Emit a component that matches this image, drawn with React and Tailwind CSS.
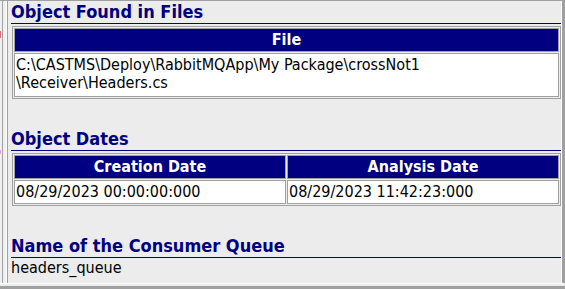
export default function App() {
  const font = "font-['DejaVu_Sans_Condensed','DejaVu_Sans',sans-serif]";
  return (
    <div className={`w-[565px] h-[289px] flex flex-col bg-[#ececec] overflow-hidden ${font}`}>
      <div className="h-[1px] bg-[#a0a0a0]" />
      <div className="flex h-[282px]">
        {/* left strip */}
        <div className="flex">
          <div className="w-[1px] bg-[#f0f0f0] flex flex-col">
            <div className="mt-[30px] h-[7px] bg-[#e07070]" />
            <div className="mt-[112px] h-[4px] bg-[#e0a0e0]" />
          </div>
          <div className="w-[1px] bg-[#f0f0f0]" />
          <div className="w-[1px] bg-[#a0a0a0]" />
          <div className="w-[3px] bg-[#f0f0f0]" />
          <div className="w-[1px] bg-white" />
          <div className="w-[1px] bg-[#a0a0a0]" />
        </div>
        {/* main */}
        <div className="flex-1 pl-[3px] flex flex-col">
          <div className="h-[22px] leading-[22px] text-[18px] font-bold text-[#000080] border-b border-[#000080] box-content">
            Object Found in Files
          </div>
          <div className="mt-[2px] ml-[1px] border border-[#a0a0a0] p-[1px] flex flex-col gap-[1px]">
            <div className="border border-[#a0a0a0] bg-[#000080] h-[22px] leading-[22px] box-content text-center text-white font-bold text-[16px]">
              File
            </div>
            <div className="border border-[#a0a0a0] bg-white h-[42px] box-content text-[16px] text-black">
              <div className="pt-[2px] pl-[1px] leading-[18px]">
                C:\CASTMS\Deploy\RabbitMQApp\My Package\crossNot1
                <br />
                \Receiver\Headers.cs
              </div>
            </div>
          </div>

          <div className="mt-[29px] h-[22px] leading-[22px] text-[18px] font-bold text-[#000080] border-b border-[#000080] box-content">
            Object Dates
          </div>
          <div className="mt-[2px] ml-[1px] border border-[#a0a0a0] p-[1px] flex flex-col gap-[1px]">
            <div className="flex gap-[1px]">
              <div className="flex-1 border border-[#a0a0a0] bg-[#000080] h-[22px] leading-[22px] box-content text-center text-white font-bold text-[16px]">
                Creation Date
              </div>
              <div className="flex-1 border border-[#a0a0a0] bg-[#000080] h-[22px] leading-[22px] box-content text-center text-white font-bold text-[16px]">
                Analysis Date
              </div>
            </div>
            <div className="flex gap-[1px]">
              <div className="flex-1 border border-[#a0a0a0] bg-white h-[22px] leading-[22px] box-content pl-[1px] text-[16px] text-black">
                08/29/2023 00:00:00:000
              </div>
              <div className="flex-1 border border-[#a0a0a0] bg-white h-[22px] leading-[22px] box-content pl-[1px] text-[16px] text-black">
                08/29/2023 11:42:23:000
              </div>
            </div>
          </div>

          <div className="mt-[29px] h-[22px] leading-[22px] text-[18px] font-bold text-[#000080] border-b border-[#000080] box-content">
            Name of the Consumer Queue
          </div>
          <div className="mt-[1px] leading-[18px] text-[16px] text-black">headers_queue</div>
        </div>
        {/* right edge */}
        <div className="w-[1px] bg-white" />
        <div className="w-[3px] bg-[#a0a0a0]" />
      </div>
      <div className="h-[1px] bg-white" />
      <div className="h-[2px] bg-[#ececec]" />
      <div className="h-[3px] bg-[#a0a0a0]" />
    </div>
  );
}
